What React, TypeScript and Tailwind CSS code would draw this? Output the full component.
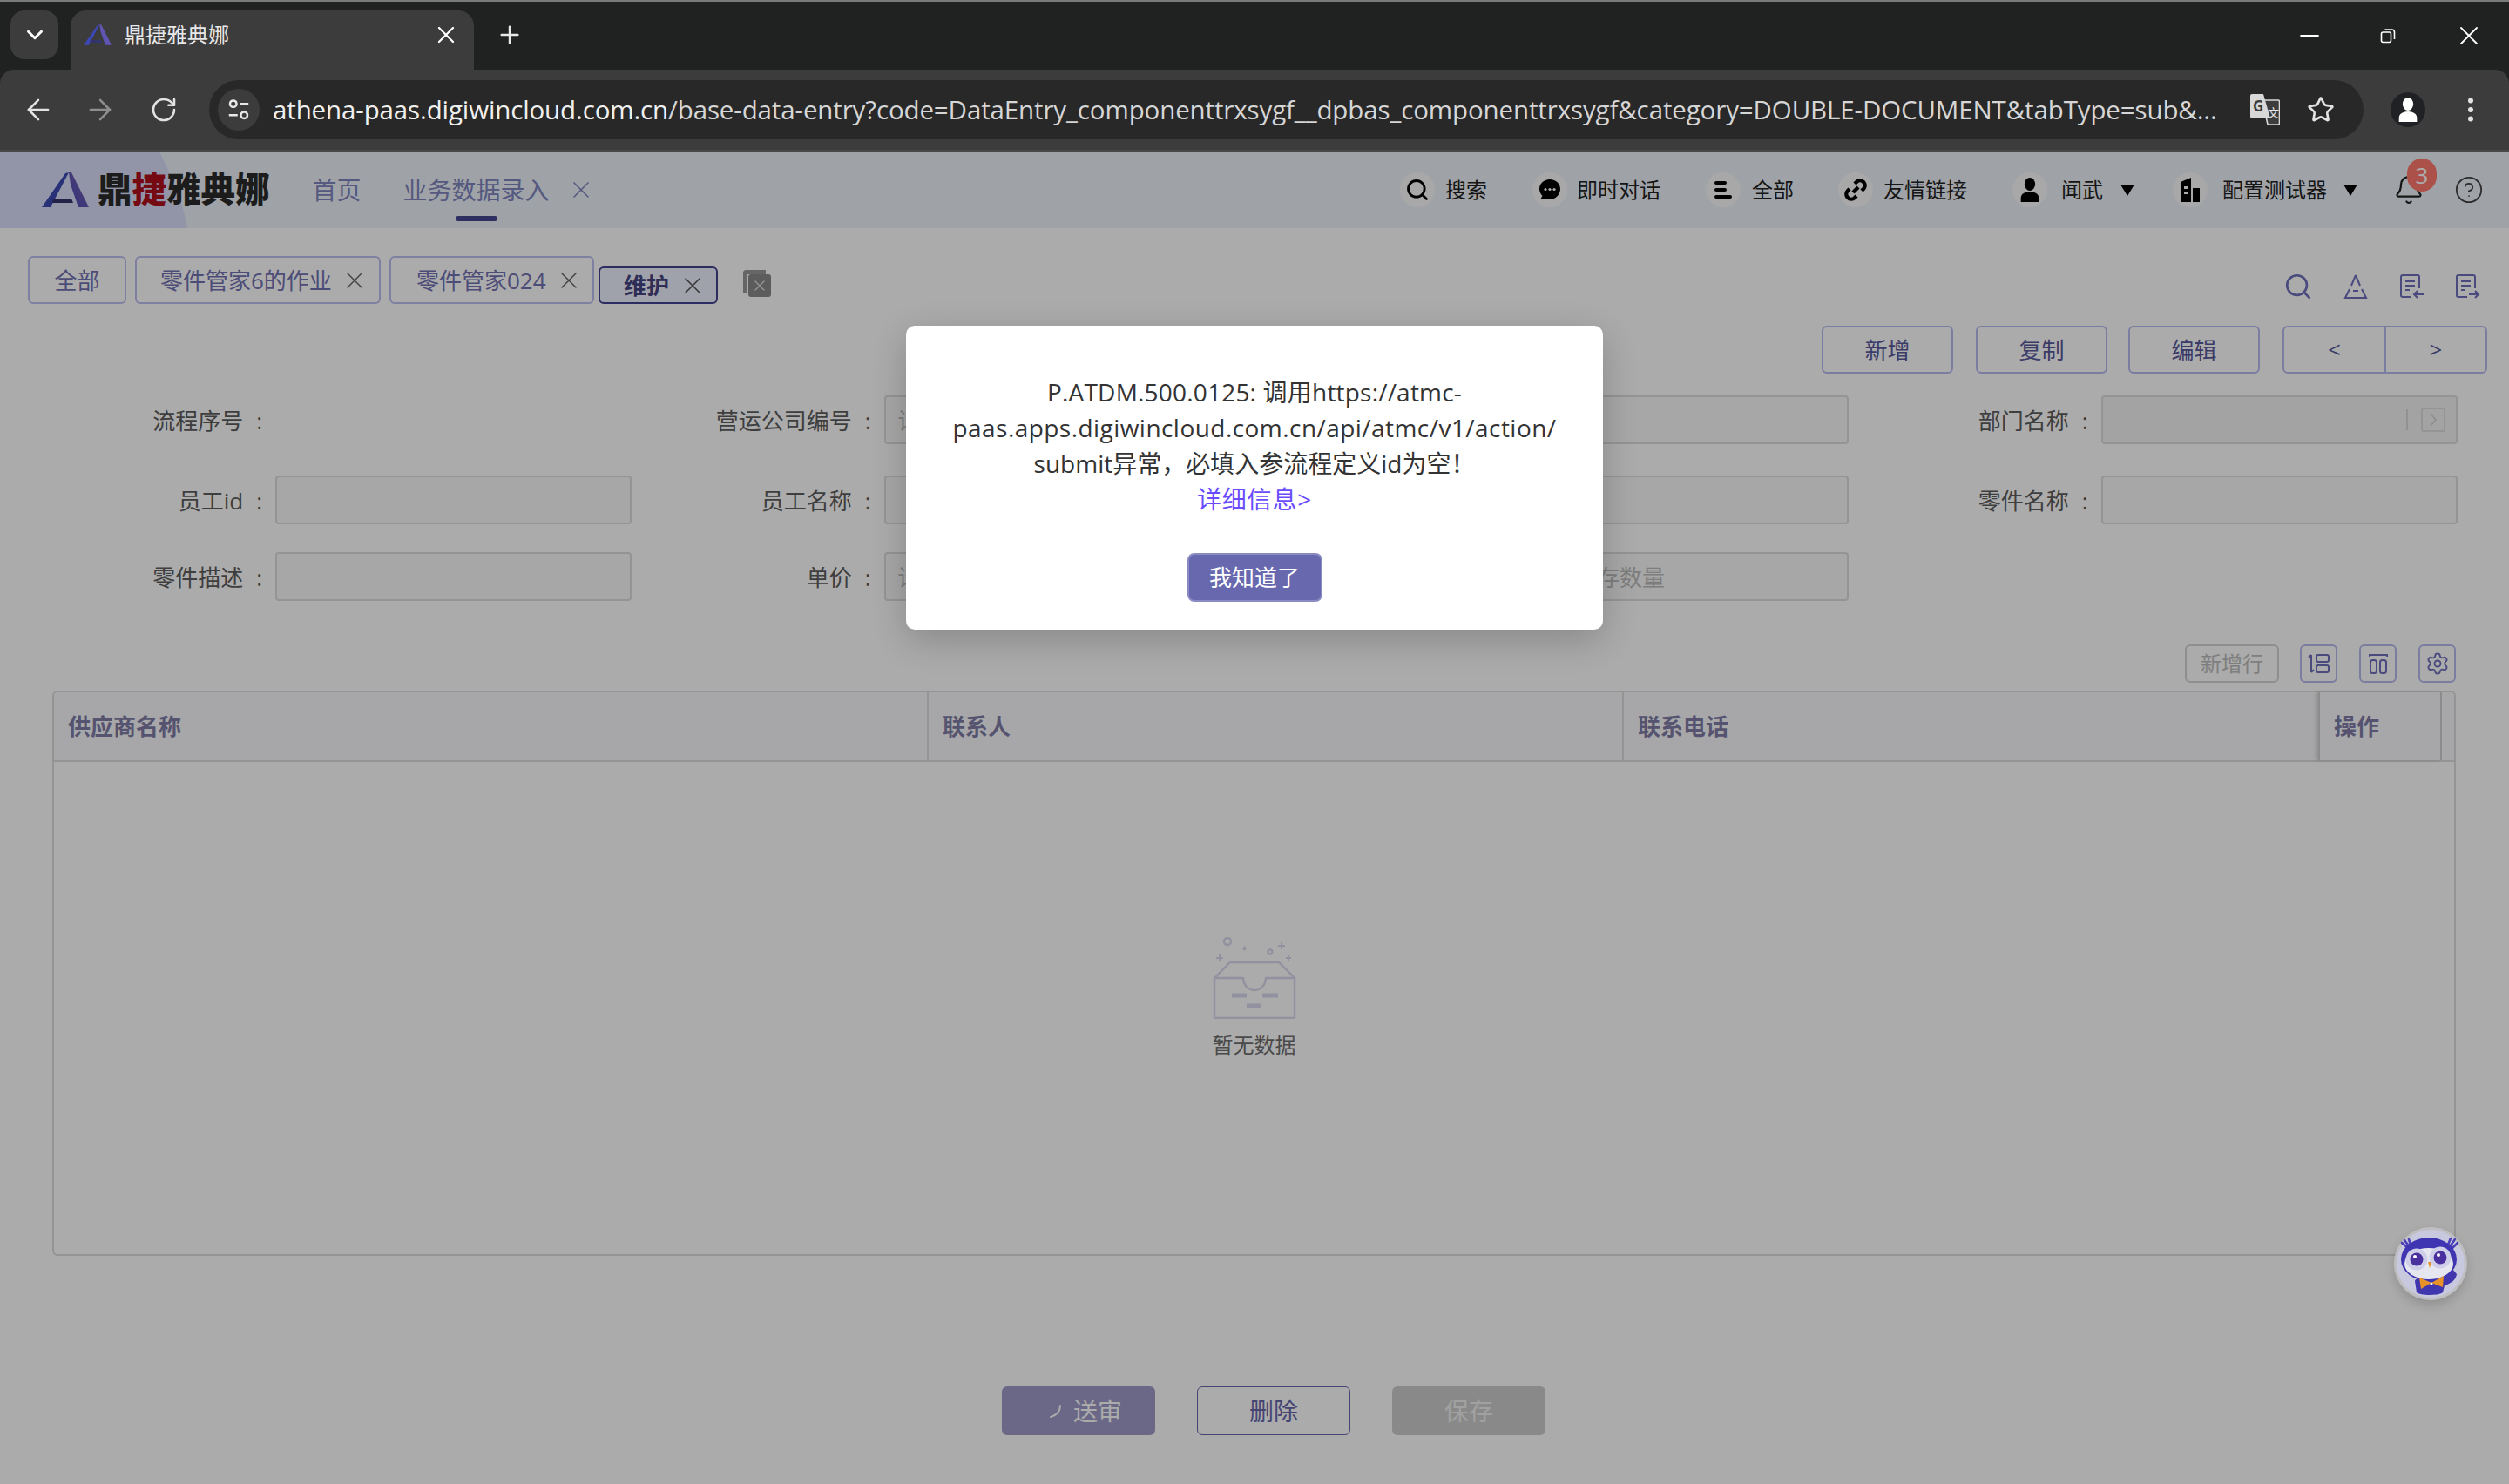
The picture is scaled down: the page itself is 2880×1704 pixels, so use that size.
import React from 'react';
import { ArrowLeft, ArrowRight, Bell, ChevronDown, CircleHelp, EllipsisVertical, Minus, Plus, RotateCw, Search, Settings, Star, X } from 'lucide-react';

const LogoA: React.FC<{ className?: string; id: string }> = ({ className, id }) => (
  <svg viewBox="0 0 54 40" className={className}>
    <defs>
      <linearGradient id={id} x1="0" y1="1" x2="1" y2="0">
        <stop offset="0" stopColor="#4a4fb8" />
        <stop offset="1" stopColor="#7d5bb0" />
      </linearGradient>
    </defs>
    <path d="M31 0h3l20 40H42L33 14z" fill={`url(#${id})`} />
    <path d="M31 0 10 40H0L27 1z" fill="#3c48b4" />
    <path d="M13 30h21l2 5H12z" fill="#33346c" />
  </svg>
);

const RestoreIcon = () => (
  <svg viewBox="0 0 20 20" className="w-[20px] h-[20px]" fill="none" stroke="#fff" strokeWidth="1.6">
    <rect x="2.5" y="6" width="11" height="11.5" rx="2" />
    <path d="M6.5 3h8a3 3 0 0 1 3 3v8" />
  </svg>
);

const TuneIcon = () => (
  <svg viewBox="0 0 24 24" className="w-[30px] h-[30px]" fill="none" stroke="#e8e8e8" strokeWidth="2">
    <circle cx="7" cy="6.5" r="3" />
    <path d="M13 6.5h8M3 17h8" />
    <circle cx="17" cy="17" r="3" />
  </svg>
);

const TranslateIcon = () => (
  <svg viewBox="0 0 34 36" className="w-[34px] h-[36px]">
    <path d="M14 7h18a1.5 1.5 0 0 1 1.5 1.5v25a1.5 1.5 0 0 1-1.5 1.5H20z" fill="#3c3c3c" stroke="#d8d8d8" strokeWidth="1.6" />
    <path d="M2 0h13l8 28H2a2 2 0 0 1-2-2V2a2 2 0 0 1 2-2z" fill="#d8d8d8" />
    <text x="3" y="20" fontSize="17" fontWeight="700" fill="#3c3c3c">G</text>
    <text x="20" y="26" fontSize="13" fill="#e8e8e8">文</text>
  </svg>
);

const Person: React.FC<{ className?: string; fill?: string }> = ({ className, fill = '#000' }) => (
  <svg viewBox="0 0 24 32" className={className}>
    <ellipse cx="12" cy="9" rx="6.5" ry="8" fill={fill} />
    <path d="M1 31v-5c0-5 5-8 11-8s11 3 11 8v5z" fill={fill} />
  </svg>
);

const HeaderBtn: React.FC<{ icon: React.ReactNode; label: string; caret?: string; className?: string; labelClass: string }> = ({ icon, label, caret, className, labelClass }) => (
  <div className={`flex items-center ${className ?? ''}`}>
    <div className="w-[40px] h-[40px] rounded-full bg-[#fbfbfb] flex items-center justify-center">{icon}</div>
    <span className={`text-[24px] text-[#222] ${labelClass}`}>{label}</span>
    {caret && <span className={`w-0 h-0 border-x-[8px] border-x-transparent border-t-[13px] border-t-black ${caret}`} />}
  </div>
);

const PageTab: React.FC<{ label: string; closable?: boolean; className: string }> = ({ label, closable, className }) => (
  <div className={`h-[55px] border-2 border-[#bcbff0] rounded-[6px] flex items-center text-[26px] text-[#7272b3] bg-white ${closable ? 'justify-start' : 'justify-center'} ${className}`}>
    <span className="pt-[2px]">{label}</span>
    {closable && <X className="w-[32px] h-[32px] ml-[10px] text-[#666]" strokeWidth={1.1} />}
  </div>
);

const DocArrow: React.FC<{ dir: 'left' | 'right'; className: string }> = ({ dir, className }) => (
  <svg viewBox="0 0 30 30" className={`w-[30px] h-[30px] ${className}`} fill="none" stroke="#6f6fbc" strokeWidth="2">
    <path d="M15 27H5a2 2 0 0 1-2-2V4a2 2 0 0 1 2-2h17a2 2 0 0 1 2 2v13" />
    <path d="M8 9h11M8 14h11M8 19h5" />
    {dir === 'left' ? <path d="M29 24H18m4-4-4 4 4 4" /> : <path d="M17 24h11m-4-4 4 4-4 4" />}
  </svg>
);

const OutlineBtn: React.FC<{ label: string; className: string }> = ({ label, className }) => (
  <button className={`h-[55px] pt-[2px] border-2 border-[#b8bbef] rounded-[6px] text-[26px] text-[#58589a] ${className}`}>{label}</button>
);

const Field: React.FC<{ label?: string; placeholder?: string; noInput?: boolean; suffix?: boolean; disabled?: boolean }> = ({ label, placeholder, noInput, suffix, disabled }) => (
  <div className="flex items-center w-[698.5px] h-[56px]">
    <div className="w-[283px] pr-[15px] pt-[2px] flex justify-end text-[26px] text-[#5d5d5d]">
      {label}
      {label && <span className="ml-[15px]">:</span>}
    </div>
    {!noInput && (
      <div className={`w-[409px] h-[56px] border-2 border-[#dddddd] rounded-[4px] flex items-center px-[14px] text-[26px] text-[#bbbbbb] ${disabled ? 'bg-[#f4f4f4]' : 'bg-[#f9f9f9]'}`}>
        <span className="flex-1 pt-[2px]">{placeholder}</span>
        {suffix && (
          <>
            <span className="w-[2px] h-[24px] bg-[#d8d8d8]" />
            <span className="ml-[15px] mr-[-2px] w-[28px] h-[28px] border-2 border-[#dddddd] rounded-[3px] flex items-center justify-center">
              <svg viewBox="0 0 10 20" className="w-[10px] h-[20px]" fill="none" stroke="#cfcfcf" strokeWidth="1.4"><path d="m2 3 6 7-6 7" /></svg>
            </span>
          </>
        )}
      </div>
    )}
  </div>
);

const ToolIcon: React.FC<{ children: React.ReactNode; className?: string }> = ({ children, className }) => (
  <div className={`w-[43px] h-[44px] border-2 border-[#b8bbef] rounded-[6px] flex items-center justify-center ${className ?? ''}`}>{children}</div>
);

const Th: React.FC<{ label: string; className: string }> = ({ label, className }) => (
  <div className={`h-full flex items-center pl-[16px] text-[26px] font-bold text-[#7f7ca6] ${className}`}>{label}</div>
);

const EmptyBox = () => (
  <svg viewBox="0 0 96 94" className="w-[96px] h-[94px]" fill="none" stroke="#d8d8ef" strokeWidth="2.4">
    <circle cx="17" cy="5" r="4" />
    <circle cx="66" cy="17" r="2.5" />
    <path d="M34 13h5M36.500 10.500v5M75 10h8M79 6v8M4 24h8M8 20v8M84 24h6M87 21v6" strokeWidth="2" />
    <path d="M2 47 20 29h56l18 18" />
    <path d="M2 47h33c0 8 6 14 13 14s13-6 13-14h33v46H2z" strokeLinejoin="round" />
    <path d="M22 67h17M57 67h18M39 79h16" strokeWidth="5" />
  </svg>
);

const Owl = () => (
  <svg viewBox="0 0 84 84" className="w-[84px] h-[84px]">
    <circle cx="42" cy="42" r="42" fill="#bfbfc2" />
    <circle cx="42" cy="42" r="39" fill="#c8c8de" />
    <path d="M9 18l7 6M12 15l6 8M17 14l3 9M62 20l3-7M65 21l5-7M67 24l6-6" stroke="#4a40b8" strokeWidth="2.6" strokeLinecap="round" />
    <path d="M24 62c0-3 8-5 16-5s22 2 27-9l5 6c-1 7-7 11-14 13l-2 8c-4 4-26 4-30 0z" fill="#4036ad" />
    <ellipse cx="40" cy="37" rx="32" ry="25" fill="#3f35b3" />
    <ellipse cx="40" cy="42" rx="28" ry="18" fill="#e6e6f0" />
    <circle cx="26" cy="37" r="12.500" fill="#cfcee8" />
    <circle cx="53" cy="35" r="12.500" fill="#cfcee8" />
    <circle cx="26" cy="37" r="7.500" fill="#4a2f9e" />
    <circle cx="53" cy="35" r="7.500" fill="#4a2f9e" />
    <circle cx="24" cy="34" r="2" fill="#fff" />
    <circle cx="51" cy="32" r="2" fill="#fff" />
    <path d="M39 40h4l-2 7z" fill="#e5912a" />
    <path d="M43 64 29 58l2 13zM43 64l14-8-1 13z" fill="#e8922a" />
    <circle cx="43" cy="65" r="1.500" fill="#fff" />
  </svg>
);

const App: React.FC = () => {
  return (
    <div className="relative w-[2880px] h-[1704px] overflow-hidden flex flex-col bg-[#202222] border-t-2 border-t-[#7a7a7a] font-['Open_Sans','Noto_Sans_CJK_SC',sans-serif]">
      {/* browser chrome */}
      <div className="h-[78px] flex items-start pl-[12px] shrink-0">
        <div className="w-[55px] h-[56px] mt-[10px] rounded-[16px] bg-[#3c3c3c] flex items-center justify-center">
          <ChevronDown className="w-[30px] h-[30px] text-white" strokeWidth={2.4} />
        </div>
        <div className="relative ml-[14px] mt-[10px] w-[463px] h-[68px] rounded-t-[18px] bg-[#3c3c3c] flex items-center pl-[15px] pb-[12px]">
          <LogoA id="favGrad" className="w-[32px] h-[30px]" />
          <span className="ml-[15px] text-[24px] text-[#e8e8e8]">鼎捷雅典娜</span>
          <X className="absolute left-[415px] w-[32px] h-[32px] text-white" strokeWidth={1.7} />
        </div>
        <Plus className="ml-[25px] mt-[22px] w-[32px] h-[32px] text-[#e8e8e8]" strokeWidth={1.8} />
        <div className="ml-auto flex items-center mt-[21px]">
          <Minus className="w-[34px] h-[34px] text-white" strokeWidth={1.3} />
          <span className="ml-[63px]"><RestoreIcon /></span>
          <X className="ml-[65px] mr-[28px] w-[36px] h-[36px] text-white" strokeWidth={1.2} />
        </div>
      </div>
      <div className="h-[94px] shrink-0 rounded-t-[16px] bg-[#3c3c3c] border-b-2 border-b-[#484848] flex items-center pl-[25px]">
        <ArrowLeft className="w-[38px] h-[38px] text-[#e3e3e3]" strokeWidth={1.6} />
        <ArrowRight className="ml-[33px] w-[38px] h-[38px] text-[#8e8e8e]" strokeWidth={1.6} />
        <RotateCw className="ml-[38px] w-[32px] h-[32px] text-[#e3e3e3]" strokeWidth={1.9} />
        <div className="ml-[36px] w-[2473px] h-[68px] rounded-full bg-[#282828] flex items-center pl-[10px]">
          <div className="w-[48px] h-[48px] rounded-full bg-[#3c3c3c] flex items-center justify-center"><TuneIcon /></div>
          <span className="ml-[15px] w-[2234px] whitespace-nowrap text-[29.500px] text-[#d6d6d6] tracking-[-0.125px]">
            <span className="text-[#f0f0f0]">athena-paas.digiwincloud.com.cn</span>/base-data-entry?code=DataEntry_componenttrxsygf__dpbas_componenttrxsygf&amp;category=DOUBLE-DOCUMENT&amp;tabType=sub&amp;...
          </span>
          <span className="ml-[36px]"><TranslateIcon /></span>
          <Star className="ml-[31px] w-[32px] h-[32px] text-[#e3e3e3]" strokeWidth={2} />
        </div>
        <div className="ml-[31px] w-[40px] h-[40px] rounded-full bg-[#202124] flex items-center justify-center overflow-hidden">
          <Person className="w-[24px] h-[30px]" fill="#ffffff" />
        </div>
        <EllipsisVertical className="ml-[34px] w-[36px] h-[36px] text-[#e3e3e3]" strokeWidth={2} />
      </div>

      {/* app */}
      <div className="relative flex-1 bg-white flex flex-col">
        <div className="relative h-[88px] shrink-0 bg-[#edf2f9] flex items-center">
          <svg viewBox="0 0 216 88" className="absolute left-0 top-0 w-[216px] h-[88px]"><path d="M0 0h183c14 28 28 60 32 88H0z" fill="#d9dffa" /></svg>
          <LogoA id="headGrad" className="relative ml-[48px] w-[54px] h-[40px]" />
          <span className="relative ml-[10px] text-[39.500px] leading-none font-black text-[#2b2b2b] whitespace-nowrap">鼎<span className="text-[#b0101c]">捷</span>雅典娜</span>
          <span className="relative ml-[49px] text-[28px] text-[#7f85be]">首页</span>
          <div className="relative ml-[48px] flex items-center">
            <span className="text-[28px] text-[#7f85be]">业务数据录入</span>
            <span className="absolute left-[60px] top-[51px] w-[48px] h-[6px] rounded-full bg-[#46458f]" />
            <X className="ml-[20px] w-[32px] h-[32px] text-[#7f85be]" strokeWidth={1.2} />
          </div>
          <div className="ml-auto flex items-center">
            <HeaderBtn labelClass="ml-[12px]" label="搜索" icon={<Search className="w-[28px] h-[28px] text-black" strokeWidth={2.4} />} />
            <HeaderBtn labelClass="ml-[11px]" className="ml-[52px]" label="即时对话" icon={
              <svg viewBox="0 0 26 26" className="w-[26px] h-[26px]"><path d="M13 1c7 0 12 5 12 11s-5 12-12 12H2l2.500-4A12 12 0 0 1 1 12C1 6 6 1 13 1z" /><circle cx="8" cy="12.500" r="1.600" fill="#fff" /><circle cx="13" cy="12.500" r="1.600" fill="#fff" /><circle cx="18" cy="12.500" r="1.600" fill="#fff" /></svg>
            } />
            <HeaderBtn labelClass="ml-[13px]" className="ml-[52px]" label="全部" icon={
              <div className="flex flex-col gap-[4px]"><span className="w-[14px] h-[4px] rounded-full bg-black" /><span className="w-[14px] h-[4px] rounded-full bg-black" /><span className="w-[20px] h-[4px] rounded-full bg-black" /></div>
            } />
            <HeaderBtn labelClass="ml-[12px]" className="ml-[51px]" label="友情链接" icon={
              <svg viewBox="0 0 26 26" className="w-[26px] h-[26px]" fill="none" stroke="#000" strokeWidth="4.400"><path d="M12 6l2-2a4.500 4.500 0 0 1 8 8l-2 2M14 20l-2 2a4.500 4.500 0 0 1-8-8l2-2M10 16l6-6" /></svg>
            } />
            <HeaderBtn labelClass="ml-[16px]" caret="ml-[20px]" className="ml-[52px]" label="闻武" icon={<Person className="w-[24px] h-[30px]" />} />
            <HeaderBtn labelClass="ml-[17px]" caret="ml-[19px]" className="ml-[44px]" label="配置测试器" icon={
              <svg viewBox="0 0 26 30" className="w-[26px] h-[30px]"><path d="M2 29V6l12-5v28z" /><path d="M16 13h8v16h-8z" /><path d="M6 11h4v3H6zM6 17h4v3H6z" fill="#fff" /></svg>
            } />
            <div className="relative ml-[43px] w-[32px] flex justify-center">
              <Bell className="w-[36px] h-[38px] shrink-0 text-[#222]" strokeWidth={1.5} />
              <span className="absolute left-[0px] top-[-17px] ml-[14px] w-[34px] h-[38px] rounded-full bg-[#ff7a6f] flex items-center justify-center text-[26px] text-white">3</span>
            </div>
            <CircleHelp className="ml-[36px] mr-[29px] w-[34px] h-[34px] text-[#444]" strokeWidth={1.3} />
          </div>
        </div>

        <div className="flex items-end pt-[32px] pl-[32px] pr-[32px]">
          <PageTab label="全部" className="w-[113px]" />
          <PageTab label="零件管家6的作业" closable className="ml-[10px] w-[282px] pl-[27px]" />
          <PageTab label="零件管家024" closable className="ml-[10px] w-[235px] pl-[29px]" />
          <div className="ml-[5px] w-[137px] h-[43px] pl-[27px] border-2 border-[#43428f] rounded-[6px] bg-[#eef0ff] flex items-center text-[26px] font-bold text-[#45447f]">
            <span className="pt-[2px]">维护</span>
            <X className="w-[32px] h-[32px] ml-[11px] text-[#555]" strokeWidth={1.2} />
          </div>
          <div className="relative ml-[29px] mb-[8px] w-[32px] h-[31px]">
            <span className="absolute left-0 top-0 w-[26px] h-[27px] border-t-[5px] border-l-[5px] rounded-tl-[4px] border-[#999]" />
            <span className="absolute right-0 bottom-0 w-[26px] h-[26px] rounded-[3px] bg-[#8a8a8a] flex items-center justify-center">
              <X className="w-[20px] h-[20px] text-[#ddd]" strokeWidth={1.6} />
            </span>
          </div>
          <div className="ml-auto self-start mt-[18px] flex items-center mr-[1px]">
            <Search className="w-[34px] h-[34px] text-[#6f6fbc]" strokeWidth={1.9} />
            <svg viewBox="0 0 30 30" className="ml-[34px] w-[30px] h-[30px]" fill="none" stroke="#6f6fbc" strokeWidth="2"><path d="M15 2l5 12M15 2l-5 12M8 18l-5 10h24l-5-10M12 20h6" /></svg>
            <DocArrow dir="left" className="ml-[34px]" />
            <DocArrow dir="right" className="ml-[34px]" />
          </div>
        </div>

        <div className="mt-[25px] flex justify-end pr-[25px]">
          <OutlineBtn label="新增" className="w-[151px]" />
          <OutlineBtn label="复制" className="ml-[26px] w-[151px]" />
          <OutlineBtn label="编辑" className="ml-[24px] w-[151px]" />
          <div className="ml-[26px] w-[235px] h-[55px] border-2 border-[#b8bbef] rounded-[6px] flex text-[26px] text-[#58589a]">
            <span className="w-[117px] flex items-center justify-center border-r-2 border-[#b8bbef]">&lt;</span>
            <span className="flex-1 flex items-center justify-center">&gt;</span>
          </div>
        </div>

        <div className="mt-[25px] pl-[33px] flex">
          <Field label="流程序号" noInput />
          <Field label="营运公司编号" placeholder="请输入" />
          <Field label="部门编号" />
          <Field label="部门名称" suffix disabled />
        </div>
        <div className="mt-[36px] pl-[33px] flex">
          <Field label="员工id" />
          <Field label="员工名称" />
          <Field label="零件编号" />
          <Field label="零件名称" />
        </div>
        <div className="mt-[32px] pl-[33px] flex">
          <Field label="零件描述" />
          <Field label="单价" placeholder="请输入" />
          <Field label="库存数量" placeholder="请输入库存数量" />
        </div>

        <div className="mt-[50px] flex justify-end items-center pr-[61px]">
          <div className="w-[108px] h-[44px] border-2 border-[#d4d4d4] rounded-[6px] flex items-center justify-center text-[24px] text-[#bdbdbd]">新增行</div>
          <ToolIcon className="ml-[24px]">
            <svg viewBox="0 0 26 26" className="w-[26px] h-[26px]" fill="none" stroke="#6f6fbc" strokeWidth="2"><path d="M4 3v20M4 3 1 6M4 23l3-3" /><rect x="10" y="3" width="14" height="8" rx="2" /><rect x="10" y="15" width="14" height="8" rx="2" /></svg>
          </ToolIcon>
          <ToolIcon className="ml-[25px]">
            <svg viewBox="0 0 26 26" className="w-[26px] h-[26px]" fill="none" stroke="#6f6fbc" strokeWidth="2"><path d="M3 5V3h20v2" /><rect x="4" y="9" width="7" height="15" rx="2.500" /><rect x="15" y="9" width="7" height="15" rx="2.500" /></svg>
          </ToolIcon>
          <ToolIcon className="ml-[25px]"><Settings className="w-[28px] h-[28px] text-[#6f6fbc]" strokeWidth={1.6} /></ToolIcon>
        </div>

        <div className="mt-[9px] ml-[60px] w-[2759px] h-[649px] border-2 border-[#dddddd] rounded-[6px] flex flex-col">
          <div className="relative h-[80px] shrink-0 bg-[#f9fafc] border-b-2 border-[#dddddd] flex rounded-t-[6px]">
            <Th label="供应商名称" className="w-[1004px] border-r-2 border-[#dddddd]" />
            <Th label="联系人" className="w-[798px] border-r-2 border-[#dddddd]" />
            <Th label="联系电话" className="w-[797px]" />
            <Th label="操作" className="w-[142px] border-x-2 border-[#cfcfcf] shadow-[-3px_0_4px_rgba(0,0,0,0.12)]" />
          </div>
          <div className="flex-1 flex flex-col items-center pt-[201px]">
            <EmptyBox />
            <span className="mt-[14px] text-[24px] leading-[32px] text-[#6f6f6f]">暂无数据</span>
          </div>
        </div>

        <div className="mt-[150px] pl-[44px] flex justify-center gap-[48px]">
          <button className="w-[176px] h-[56px] pl-[14px] rounded-[6px] bg-[#9e9bc8] flex items-center justify-center text-[28px] text-white">
            <svg viewBox="0 0 20 20" className="w-[20px] h-[20px] mr-[10px]" fill="none" stroke="#ffffff" strokeWidth="2" strokeLinecap="round"><path d="M15 4c0 7-4 11-11 13" /></svg>
            送审
          </button>
          <button className="w-[176px] h-[56px] rounded-[6px] border border-[#6868ae] flex items-center justify-center text-[28px] text-[#6868ae]">删除</button>
          <button className="w-[176px] h-[56px] rounded-[6px] bg-[#cdcdcd] flex items-center justify-center text-[28px] text-[#f0f0f0]">保存</button>
        </div>

        {/* dialog */}
        <div className="absolute inset-0 bg-black/[0.33] flex justify-center items-start pt-[200px]">
          <div className="w-[800px] h-[349px] bg-white rounded-[10px] shadow-[0_12px_40px_rgba(0,0,0,0.2)] flex flex-col items-center pt-[56px] text-center">
            <p className="text-[28px] leading-[41px] text-[#333]">
              <span className="tracking-[0.2px]">P.ATDM.500.0125: 调用https://atmc-</span><br /><span className="tracking-[0.45px]">paas.apps.digiwincloud.com.cn/api/atmc/v1/action/</span><br />submit异常，必填入参流程定义id为空！
            </p>
            <span className="text-[28px] leading-[41px] text-[#6a4cff] tracking-[0.8px]">详细信息&gt;</span>
            <button className="mt-[41px] w-[155px] h-[56px] rounded-[8px] bg-[#6868ae] border-2 border-[#8b8bc4] text-[26px] text-white">我知道了</button>
          </div>
        </div>

        <div className="absolute left-[2748px] top-[1235px] rounded-full shadow-[0_6px_12px_rgba(0,0,0,0.15)]">
          <Owl />
        </div>
      </div>
    </div>
  );
};

export default App;
